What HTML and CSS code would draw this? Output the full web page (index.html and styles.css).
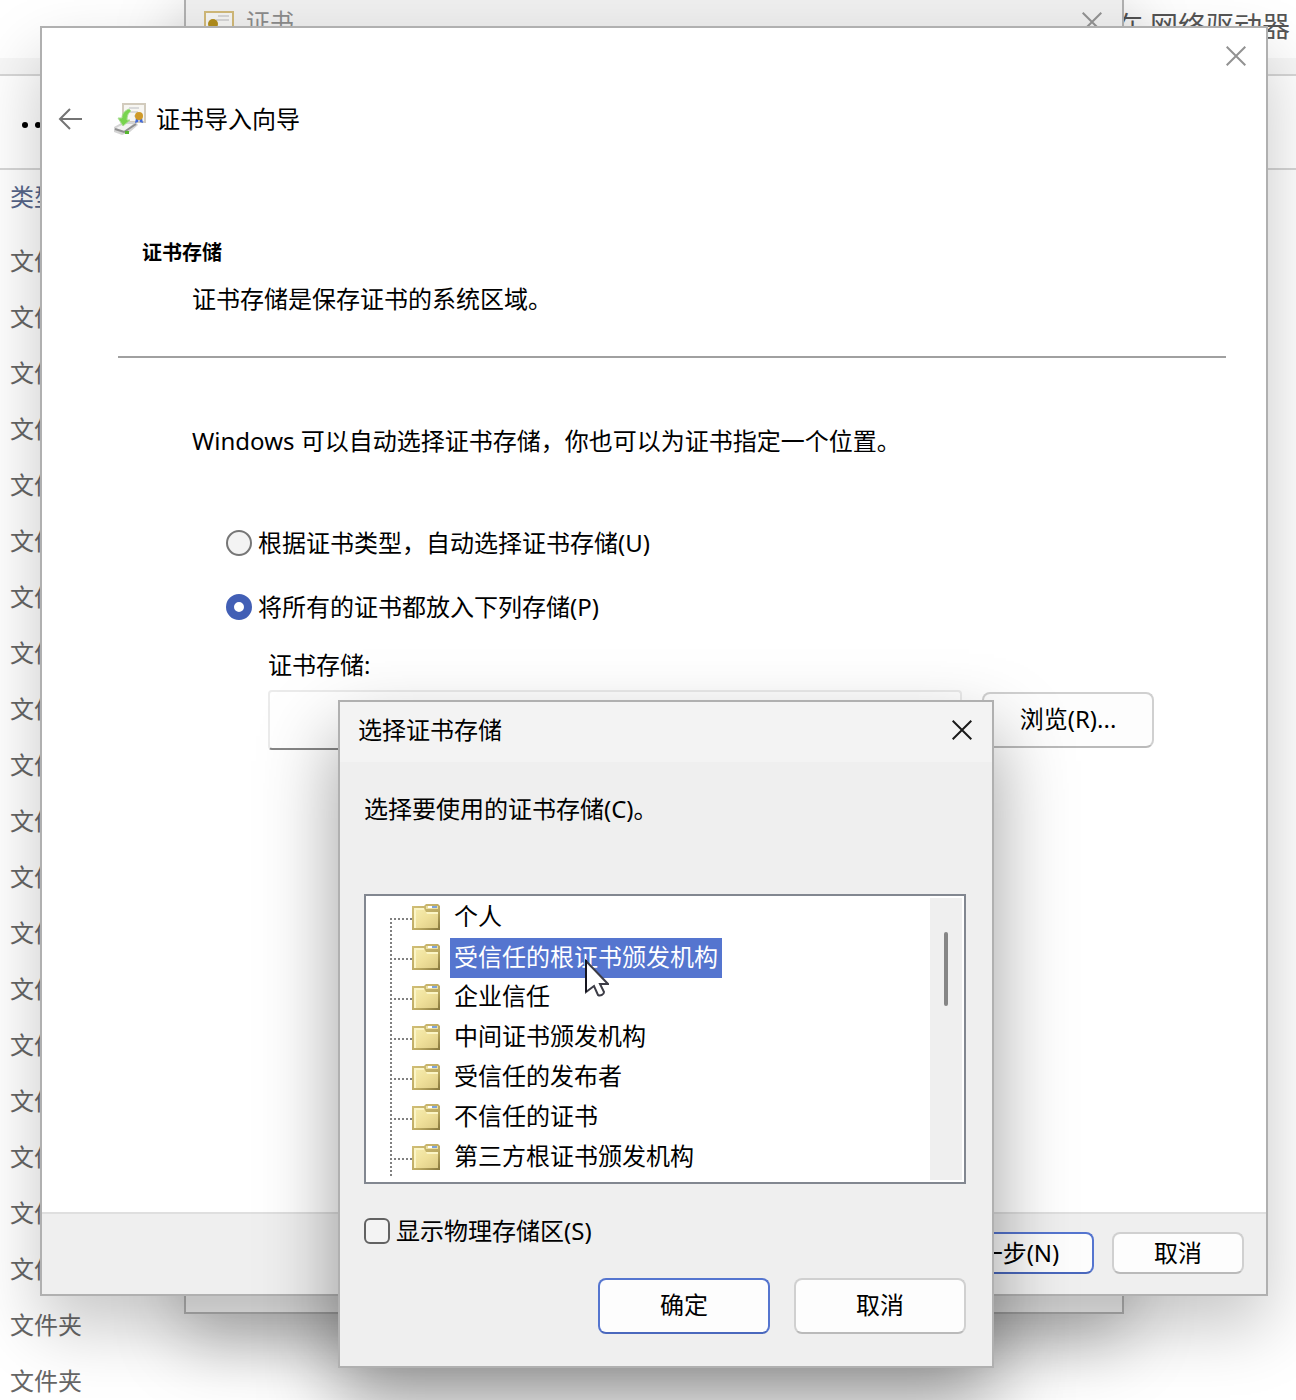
FILE: index.html
```html
<!DOCTYPE html>
<html lang="zh-CN">
<head>
    <meta charset="UTF-8">
    <meta name="viewport" content="width=device-width, initial-scale=1.0">
    <title>证书导入向导</title>
    <link rel="stylesheet" href="styles.css">
</head>
<body>

<svg class="defs" aria-hidden="true">
    <defs>
        <linearGradient id="folderFill" x1="0" y1="0" x2="1" y2="1">
            <stop offset="0" stop-color="#f6edb0"/>
            <stop offset="0.5" stop-color="#efe09a"/>
            <stop offset="1" stop-color="#dccb85"/>
        </linearGradient>
        <linearGradient id="folderEdge" x1="0" y1="0" x2="1" y2="1">
            <stop offset="0" stop-color="#d3c078"/>
            <stop offset="0.6" stop-color="#bba961"/>
            <stop offset="1" stop-color="#85763c"/>
        </linearGradient>
    </defs>
    <symbol id="folder" viewBox="0 0 28 26">
        <path d="M0 2h12l2-2h12l2 2v24H0z" fill="url(#folderEdge)"/>
        <path d="M2 4h10l2 4h12v16H2z" fill="url(#folderFill)"/>
        <path d="M2 4h2v20H2zM4 4h8v2H4zM14 8h12v2H15z" fill="#fbf5c6"/>
        <path d="M14 2h12v3H14z" fill="#eadfa2"/>
        <path d="M16 2h4v2h-4z" fill="#fff"/>
        <path d="M20 2h5v2h-5z" fill="#7fa3d8"/>
    </symbol>
    <symbol id="close" viewBox="0 0 20 20">
        <path d="M0.7 0.7l18.6 18.6M19.3 0.7L0.7 19.3" fill="none" stroke="currentColor" stroke-width="2"/>
    </symbol>
</svg>

<main class="desktop">

    <!-- Explorer behind everything -->
    <section class="explorer">
        <div class="explorer-search">在 网络驱动器</div>
        <div class="explorer-toolbar">
            <button class="icon-button" aria-label="更多">
                <svg width="32" height="6" viewBox="0 0 32 6"><circle cx="3" cy="3" r="3"/><circle cx="16" cy="3" r="3"/><circle cx="29" cy="3" r="3"/></svg>
            </button>
        </div>
        <table class="files">
            <thead><tr><th>类型</th></tr></thead>
            <tbody>
                <tr><td>文件夹</td></tr>
                <tr><td>文件夹</td></tr>
                <tr><td>文件夹</td></tr>
                <tr><td>文件夹</td></tr>
                <tr><td>文件夹</td></tr>
                <tr><td>文件夹</td></tr>
                <tr><td>文件夹</td></tr>
                <tr><td>文件夹</td></tr>
                <tr><td>文件夹</td></tr>
                <tr><td>文件夹</td></tr>
                <tr><td>文件夹</td></tr>
                <tr><td>文件夹</td></tr>
                <tr><td>文件夹</td></tr>
                <tr><td>文件夹</td></tr>
                <tr><td>文件夹</td></tr>
                <tr><td>文件夹</td></tr>
                <tr><td>文件夹</td></tr>
                <tr><td>文件夹</td></tr>
                <tr><td>文件夹</td></tr>
                <tr><td>文件夹</td></tr>
                <tr><td>文件夹</td></tr>
            </tbody>
        </table>
    </section>

    <!-- Certificate window -->
    <section class="window certificate">
        <header class="certificate-title">
            <svg width="30" height="22" viewBox="0 0 30 22">
                <rect x="1" y="1" width="28" height="20" fill="#f4f4f2" stroke="#d0b878" stroke-width="2"/>
                <path d="M14 5h11M12 9h13" stroke="#d5d5d5" stroke-width="2"/>
                <circle cx="9" cy="13" r="5" fill="#b18d1c"/>
            </svg>
            <span>证书</span>
            <button class="icon-button close" aria-label="关闭"><svg width="20" height="20"><use href="#close"/></svg></button>
        </header>
    </section>

    <!-- Import wizard -->
    <section class="window wizard">
        <header class="wizard-title">
            <button class="icon-button close" aria-label="关闭"><svg width="20" height="20"><use href="#close"/></svg></button>
        </header>
        <div class="wizard-nav">
            <button class="icon-button" aria-label="上一步">
                <svg width="24" height="22" viewBox="0 0 24 22"><path d="M24 11H2M12 1L2 11l10 10" fill="none" stroke="#747474" stroke-width="2"/></svg>
            </button>
            <svg width="32" height="32" viewBox="0 0 32 32">
                <rect x="9" y="1" width="22" height="18" fill="#f7f6f2" stroke="#d2cbbd" stroke-width="2"/>
                <path d="M15 5h10M14 9h10M20 13h4" stroke="#d9d9d9" stroke-width="2"/>
                <path d="M0 24l9-5h13l2 3-8 7-8 3-8-3z" fill="#d4d4d4"/>
                <path d="M2 25l8-4h9l-8 7z" fill="#f3f3f3"/>
                <path d="M1 26l9 3 12-8" fill="none" stroke="#8f8f8f" stroke-width="2"/>
                <path d="M15 6c-5 2-7 5-7 9H4l5 8 7-6h-3c0-4 1-7 4-9z" fill="#78d44e" stroke="#a9dd94"/>
                <path d="M22 15l-1 5 3-1 1-4zM25 15l1 4 3 1-1-5z" fill="#4169d8"/>
                <circle cx="25" cy="13" r="4" fill="#cf9a29"/>
                <rect x="11" y="28" width="4" height="3" fill="#55b52e"/>
            </svg>
            <h1>证书导入向导</h1>
        </div>

        <div class="wizard-intro">
            <h2>证书存储</h2>
            <p>证书存储是保存证书的系统区域。</p>
        </div>

        <form class="wizard-form">
            <p>Windows 可以自动选择证书存储，你也可以为证书指定一个位置。</p>
            <div class="choices">
                <label class="choice"><input type="radio" name="store">根据证书类型，自动选择证书存储(U)</label>
                <label class="choice"><input type="radio" name="store" checked>将所有的证书都放入下列存储(P)</label>
                <div class="store">
                    <label for="storeName">证书存储:</label>
                    <div class="store-row">
                        <input type="text" id="storeName">
                        <button type="button" class="button">浏览(R)...</button>
                    </div>
                </div>
            </div>
        </form>

        <footer class="wizard-footer">
            <button class="button primary next">下一步(N)</button>
            <button class="button cancel">取消</button>
        </footer>
    </section>

    <!-- Select store dialog -->
    <section class="window dialog" role="dialog" aria-labelledby="dialogTitle">
        <header class="dialog-title">
            <h2 id="dialogTitle">选择证书存储</h2>
            <button class="icon-button close" aria-label="关闭"><svg width="20" height="20"><use href="#close"/></svg></button>
        </header>
        <div class="dialog-body">
            <p>选择要使用的证书存储(C)。</p>
            <div class="tree">
                <ul>
                    <li><svg width="28" height="26"><use href="#folder"/></svg><span>个人</span></li>
                    <li class="selected"><svg width="28" height="26"><use href="#folder"/></svg><span>受信任的根证书颁发机构</span></li>
                    <li><svg width="28" height="26"><use href="#folder"/></svg><span>企业信任</span></li>
                    <li><svg width="28" height="26"><use href="#folder"/></svg><span>中间证书颁发机构</span></li>
                    <li><svg width="28" height="26"><use href="#folder"/></svg><span>受信任的发布者</span></li>
                    <li><svg width="28" height="26"><use href="#folder"/></svg><span>不信任的证书</span></li>
                    <li><svg width="28" height="26"><use href="#folder"/></svg><span>第三方根证书颁发机构</span></li>
                </ul>
                <div class="scrollbar"><div class="thumb"></div></div>
            </div>
            <label class="choice"><input type="checkbox">显示物理存储区(S)</label>
            <div class="dialog-buttons">
                <button class="button primary">确定</button>
                <button class="button">取消</button>
            </div>
        </div>
    </section>

    <svg class="cursor" width="24" height="38" viewBox="0 0 24 38" aria-hidden="true">
        <path d="M1 2v31l8-6 4 9c2 1 6 0 6-3l-4-8h8z" fill="#fff" stroke="#3c3c46" stroke-width="2"/>
        <path d="M1 1v32" stroke="#15151f" stroke-width="2"/>
    </svg>

</main>

</body>
</html>
```
FILE: styles.css
```css
* {
    box-sizing: border-box;
}
body {
    margin: 0;
    font-family: "Noto Sans", "Noto Sans CJK SC", sans-serif;
    font-size: 24px;
    line-height: 32px;
    color: #000;
    background-color: #fff;
}
h1, h2, p, ul {
    margin: 0;
    padding: 0;
    font-size: 24px;
    font-weight: 400;
}
svg {
    display: block;
    flex: none;
}
input, button {
    margin: 0;
    font: inherit;
    color: inherit;
}
.defs {
    position: absolute;
    width: 0;
    height: 0;
}
.desktop {
    position: relative;
    height: 100vh;
    overflow: hidden;
}
.window {
    position: absolute;
    border: 2px solid #b0b0b0;
    background-color: #efefef;
}
.icon-button {
    display: flex;
    padding: 0;
    border: 0;
    background: none;
}
.close {
    margin-left: auto;
    color: #929292;
}
.button {
    height: 56px;
    min-width: 172px;
    padding: 0 24px 2px;
    border: 2px solid #d0d0d0;
    border-bottom-color: #bababa;
    border-radius: 8px;
    background-color: #fdfdfd;
}
.button.primary {
    border-color: #5575cf;
    border-bottom-color: #4a68bd;
}

/* Explorer */
.explorer-search {
    height: 76px;
    padding: 10px 6px 0 0;
    border-bottom: 2px solid #d6d6d6;
    background: linear-gradient(#fff 58px, #f7f7f7 58px);
    color: #555;
    font-size: 28px;
    text-align: right;
}
.explorer-toolbar {
    display: flex;
    align-items: center;
    height: 94px;
    padding: 6px 0 0 22px;
    border-bottom: 2px solid #d6d6d6;
}
.files {
    width: 100%;
    border-collapse: collapse;
    color: #666;
}
.files th {
    height: 63px;
    padding: 0 10px 10px;
    font-weight: 400;
    text-align: left;
    color: #56658a;
}
.files td {
    height: 56px;
    padding: 0 10px;
}

/* Certificate window */
.certificate {
    top: -16px;
    left: 184px;
    right: 172px;
    height: 1330px;
    box-shadow: 0 32px 64px rgba(0, 0, 0, 0.25);
}
.certificate-title {
    display: flex;
    align-items: center;
    gap: 12px;
    height: 76px;
    padding: 0 20px 4px 18px;
    color: #8b8b8b;
}

/* Wizard */
.wizard {
    top: 26px;
    left: 40px;
    right: 28px;
    background-color: #fff;
    box-shadow: 0 32px 64px rgba(0, 0, 0, 0.22);
}
.wizard-title {
    display: flex;
    align-items: center;
    height: 56px;
    padding-right: 20px;
}
.wizard-nav {
    display: flex;
    align-items: center;
    height: 70px;
    padding-left: 16px;
}
.wizard-nav svg {
    margin-right: 10px;
}
.wizard-nav .icon-button {
    margin-right: 22px;
}
.wizard-intro {
    margin: 0 40px 0 76px;
    padding: 83px 24px 41px;
    border-bottom: 2px solid #a0a0a0;
}
.wizard-intro h2 {
    margin-bottom: 14px;
    font-size: 20px;
    font-weight: 700;
}
.wizard-intro p {
    padding-left: 50px;
}
.wizard-form {
    padding: 67px 112px 462px 150px;
}
.choices {
    padding: 70px 0 0 34px;
}
.choice {
    display: flex;
    align-items: center;
    gap: 6px;
}
.choice + .choice {
    margin-top: 32px;
}
.choice input {
    appearance: none;
    flex: none;
    width: 26px;
    height: 26px;
    border: 2px solid #767676;
    background-color: #f3f3f3;
}
.choice input[type="radio"] {
    border-radius: 50%;
}
.choice input[type="radio"]:checked {
    border: 8px solid #425fb5;
    background-color: #fff;
}
.choice input[type="checkbox"] {
    border-color: #626262;
    border-radius: 6px;
}
.store {
    margin-top: 26px;
    padding-left: 42px;
}
.store-row {
    display: flex;
    align-items: center;
    gap: 20px;
    margin-top: 9px;
}
.store-row input {
    flex: 1;
    min-width: 0;
    height: 60px;
    border: 2px solid #ebebeb;
    border-bottom-color: #868686;
    border-radius: 4px;
    background-color: #fff;
}
.wizard-footer {
    display: flex;
    justify-content: flex-end;
    gap: 18px;
    padding: 18px 22px 20px;
    border-top: 2px solid #dfdfdf;
    background-color: #efefef;
}
.wizard-footer .button {
    height: 42px;
    min-width: 132px;
    padding-bottom: 0;
}
.wizard-footer .next {
    min-width: 174px;
}

/* Dialog */
.dialog {
    top: 700px;
    left: 338px;
    right: 302px;
    box-shadow: 0 36px 72px rgba(0, 0, 0, 0.38);
}
.dialog-title {
    display: flex;
    align-items: center;
    height: 60px;
    padding: 0 20px 4px 18px;
    background-color: #f3f3f3;
}
.dialog-title .close {
    color: #1a1a1a;
}
.dialog-body {
    padding: 31px 26px 32px 24px;
}
.tree {
    display: flex;
    margin: 69px 0 31px;
    padding: 2px;
    border: 2px solid #828790;
    background-color: #fff;
}
.tree ul {
    flex: 1;
    padding: 0 0 2px 22px;
    list-style: none;
}
/* dotted branches: one vertical run per row, one horizontal run to the icon */
.tree li {
    display: flex;
    align-items: center;
    gap: 10px;
    height: 40px;
    padding: 0 0 2px 22px;
    background:
        repeating-linear-gradient(90deg, #808080 0 2px, #fff 2px 4px) 0 20px / 22px 2px no-repeat,
        repeating-linear-gradient(#808080 0 2px, #fff 2px 4px) 0 0 / 2px 40px no-repeat;
}
.tree li:first-child {
    background-position: 0 20px, 0 20px;
}
.tree li span {
    padding: 3px 4px 5px;
}
.tree li.selected {
    padding-bottom: 0;
}
.tree li.selected span {
    color: #fff;
    background-color: #5575cf;
}
.tree li.selected svg {
    margin-bottom: 2px;
}
.scrollbar {
    width: 32px;
    padding: 34px 14px;
    background-color: #efefef;
}
.thumb {
    height: 74px;
    border-radius: 2px;
    background-color: #868686;
}
.dialog-buttons {
    display: flex;
    justify-content: flex-end;
    gap: 24px;
    margin-top: 31px;
}
.cursor {
    position: absolute;
    top: 959px;
    left: 585px;
}
```
